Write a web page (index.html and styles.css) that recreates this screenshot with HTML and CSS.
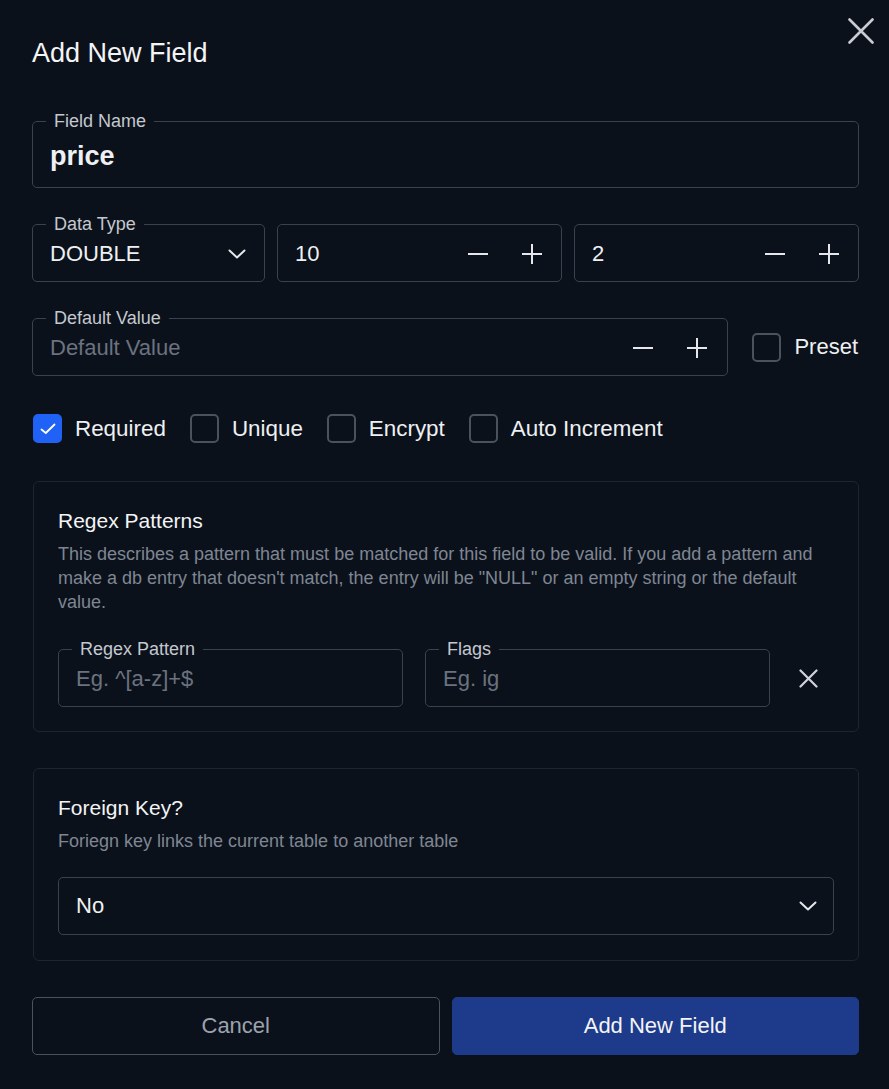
FILE: index.html
```html
<!DOCTYPE html>
<html lang="en">
<head>
<meta charset="utf-8">
<title>Add New Field</title>
<link rel="stylesheet" href="styles.css">
</head>
<body>
<div class="modal">
  <div class="header">
    <h1 class="title">Add New Field</h1>
    <button class="close" aria-label="Close">
      <svg width="26" height="26" viewBox="0 0 26 26"><path d="M1.5 1.5 L24.5 24.5 M24.5 1.5 L1.5 24.5" stroke="#c9ccd2" stroke-width="2.6" stroke-linecap="round" fill="none"/></svg>
    </button>
  </div>

  <fieldset class="field field-name">
    <legend>Field Name</legend>
    <div class="row name-row"><span class="value bold">price</span></div>
  </fieldset>

  <div class="type-row">
    <fieldset class="field">
      <legend>Data Type</legend>
      <div class="row">
        <span class="value">DOUBLE</span>
        <svg class="chev" width="18" height="10" viewBox="0 0 18 10"><path d="M1.5 1.5 L9 8.5 L16.5 1.5" stroke="#e5e7eb" stroke-width="2" fill="none" stroke-linecap="round" stroke-linejoin="round"/></svg>
      </div>
    </fieldset>
    <div class="box">
      <span class="value">10</span>
      <div class="steppers">
        <svg width="20" height="20" viewBox="0 0 20 20"><path d="M0 10 H20" stroke="#e5e7eb" stroke-width="2"/></svg>
        <svg width="20" height="20" viewBox="0 0 20 20"><path d="M0 10 H20 M10 0 V20" stroke="#e5e7eb" stroke-width="2"/></svg>
      </div>
    </div>
    <div class="box">
      <span class="value">2</span>
      <div class="steppers">
        <svg width="20" height="20" viewBox="0 0 20 20"><path d="M0 10 H20" stroke="#e5e7eb" stroke-width="2"/></svg>
        <svg width="20" height="20" viewBox="0 0 20 20"><path d="M0 10 H20 M10 0 V20" stroke="#e5e7eb" stroke-width="2"/></svg>
      </div>
    </div>
  </div>

  <div class="default-row">
    <fieldset class="field grow">
      <legend>Default Value</legend>
      <div class="row">
        <span class="value placeholder">Default Value</span>
        <div class="steppers">
          <svg width="20" height="20" viewBox="0 0 20 20"><path d="M0 10 H20" stroke="#e5e7eb" stroke-width="2"/></svg>
          <svg width="20" height="20" viewBox="0 0 20 20"><path d="M0 10 H20 M10 0 V20" stroke="#e5e7eb" stroke-width="2"/></svg>
        </div>
      </div>
    </fieldset>
    <label class="check preset"><span class="cb"></span><span>Preset</span></label>
  </div>

  <div class="checks">
    <label class="check"><span class="cb on"><svg width="16" height="12" viewBox="0 0 16 12"><path d="M1.5 6.5 L5.8 10 L14.5 1.5" stroke="#fff" stroke-width="1.8" fill="none" stroke-linecap="round" stroke-linejoin="round"/></svg></span><span>Required</span></label>
    <label class="check"><span class="cb"></span><span>Unique</span></label>
    <label class="check"><span class="cb"></span><span>Encrypt</span></label>
    <label class="check"><span class="cb"></span><span>Auto Increment</span></label>
  </div>

  <section class="card regex">
    <h2 class="card-title">Regex Patterns</h2>
    <p class="card-desc">This describes a pattern that must be matched for this field to be valid. If you add a pattern and make a db entry that doesn't match, the entry will be "NULL" or an empty string or the default value.</p>
    <div class="regex-row">
      <fieldset class="field">
        <legend>Regex Pattern</legend>
        <div class="row"><span class="value placeholder">Eg. ^[a-z]+$</span></div>
      </fieldset>
      <fieldset class="field">
        <legend>Flags</legend>
        <div class="row"><span class="value placeholder">Eg. ig</span></div>
      </fieldset>
      <button class="remove" aria-label="Remove">
        <svg width="19" height="19" viewBox="0 0 19 19"><path d="M1.5 1.5 L17.5 17.5 M17.5 1.5 L1.5 17.5" stroke="#d1d5db" stroke-width="2.2" stroke-linecap="round" fill="none"/></svg>
      </button>
    </div>
  </section>

  <section class="card fk">
    <h2 class="card-title">Foreign Key?</h2>
    <p class="card-desc">Foriegn key links the current table to another table</p>
    <div class="box select">
      <span class="value">No</span>
      <svg class="chev" width="18" height="10" viewBox="0 0 18 10"><path d="M1.5 1.5 L9 8.5 L16.5 1.5" stroke="#e5e7eb" stroke-width="2" fill="none" stroke-linecap="round" stroke-linejoin="round"/></svg>
    </div>
  </section>

  <div class="actions">
    <button class="btn cancel">Cancel</button>
    <button class="btn primary">Add New Field</button>
  </div>
</div>
</body>
</html>
```

FILE: styles.css
```css
* { box-sizing: border-box; }

html, body {
  margin: 0;
  background: #0b111a;
  color: #f1f3f5;
  font-family: "Liberation Sans", Arial, sans-serif;
}

.modal {
  width: 889px;
  height: 1089px;
  padding: 18px 30px 0 32px;
  display: flex;
  flex-direction: column;
}

.header {
  display: flex;
  justify-content: space-between;
  align-items: flex-start;
  margin-right: -15px;
}

.title {
  margin: 19px 0 0 0;
  font-size: 27px;
  line-height: 32px;
  font-weight: 400;
  color: #f3f4f6;
}

.close, .remove {
  background: none;
  border: 0;
  padding: 0;
  display: flex;
  align-items: center;
  justify-content: center;
  cursor: pointer;
}

.close { width: 26px; height: 26px; }

.field {
  margin: 0;
  border: 1px solid #3a4250;
  border-radius: 5px;
  padding: 0 20px 7px 17px;
  min-width: 0;
}

.field legend {
  font-size: 18px;
  line-height: 20px;
  color: #c4c8cf;
  padding: 0 8px;
  margin-left: -4px;
}

.row {
  height: 40px;
  display: flex;
  align-items: center;
  justify-content: space-between;
}

.field-name {
  margin-top: 42px;
  padding-bottom: 10px;
}

.name-row { height: 46px; padding-top: 3px; }

.value {
  font-size: 22px;
  line-height: 26px;
  color: #eef0f3;
  white-space: nowrap;
}

.value.bold {
  font-weight: 700;
  font-size: 27px;
}

.placeholder { color: #6b7280; }

.chev { display: block; margin-right: -2px; }

.box {
  height: 58px;
  border: 1px solid #3a4250;
  border-radius: 5px;
  padding: 2px 19px 0 17px;
  display: flex;
  align-items: center;
  justify-content: space-between;
}

.steppers {
  display: flex;
  gap: 34px;
}

.steppers svg { display: block; }

.type-row {
  margin-top: 26px;
  display: grid;
  grid-template-columns: 233px 1fr 1fr;
  column-gap: 12px;
  align-items: end;
}

.default-row {
  margin-top: 26px;
  display: flex;
  align-items: flex-end;
  gap: 24px;
}

.grow { flex: 1; }

.preset { height: 58px; gap: 14px; padding-right: 1px; }

.check {
  display: flex;
  align-items: center;
  gap: 13px;
  font-size: 22px;
  line-height: 26px;
  color: #eef0f3;
}

.cb {
  width: 29px;
  height: 29px;
  border: 2px solid #4b525e;
  border-radius: 5px;
  display: flex;
  align-items: center;
  justify-content: center;
  flex: none;
}

.cb.on {
  background: #1f62f5;
  border-color: #1f62f5;
}

.cb svg { display: block; }

.checks {
  margin-top: 38px;
  padding-left: 1px;
  display: flex;
  gap: 24px;
}

.checks .check { gap: 13px; font-size: 22.4px; }

.card {
  border: 1px solid #1e2530;
  border-radius: 6px;
  padding: 24px 24px 24px 24px;
}

.regex { margin-top: 38px; margin-left: 1px; }
.fk { margin-top: 36px; margin-left: 1px; padding-bottom: 25px; }

.card-title {
  margin: 0;
  font-size: 21px;
  line-height: 30px;
  font-weight: 400;
  color: #f3f4f6;
}

.card-desc {
  margin: 6px 0 0 0;
  font-size: 18px;
  line-height: 24px;
  color: #7f8693;
}

.regex-row {
  margin-top: 25px;
  display: grid;
  grid-template-columns: 1fr 1fr 42px;
  column-gap: 22px;
  align-items: end;
}

.remove {
  width: 32px;
  height: 58px;
}

.select {
  margin-top: 24px;
  padding: 0 18px 0 17px;
}

.actions {
  margin-top: 36px;
  display: grid;
  grid-template-columns: 1fr 1fr;
  gap: 12px;
}

.btn {
  height: 58px;
  border-radius: 5px;
  font-family: "Liberation Sans", Arial, sans-serif;
  font-size: 22px;
  cursor: pointer;
}

.cancel {
  background: transparent;
  border: 1px solid #4b525e;
  color: #9ca3af;
}

.primary {
  background: #1e3a8a;
  border: 1px solid #1e3a8a;
  color: #f3f4f6;
}
```
